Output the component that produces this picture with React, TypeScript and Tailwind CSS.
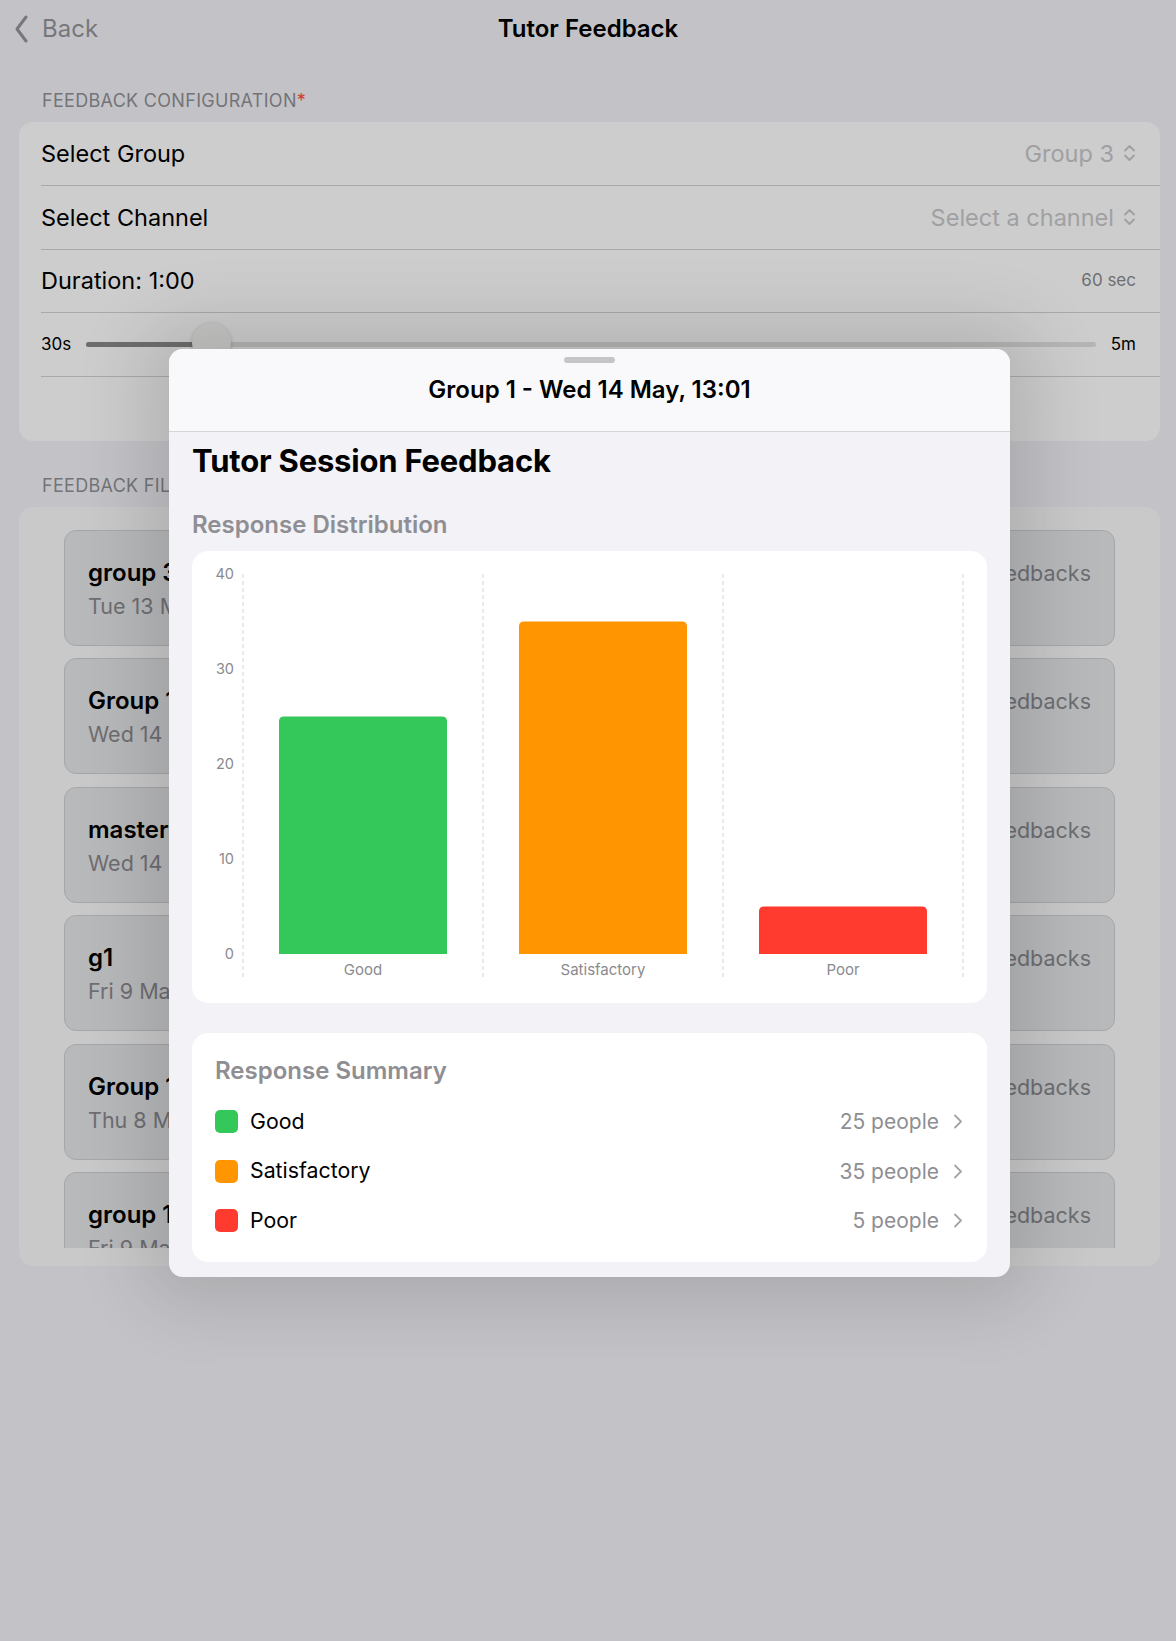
import React from "react";

const UpDown = ({ color = "#a0a0a4" }: { color?: string }) => (
  <svg width="13" height="18" viewBox="0 0 13 18" fill="none">
    <path d="M2 6.5 L6.5 2 L11 6.5" stroke={color} strokeWidth="1.8" strokeLinecap="round" strokeLinejoin="round" />
    <path d="M2 11.5 L6.5 16 L11 11.5" stroke={color} strokeWidth="1.8" strokeLinecap="round" strokeLinejoin="round" />
  </svg>
);

const ChevronRight = () => (
  <svg width="10" height="15" viewBox="0 0 10 15" fill="none">
    <path d="M2 1.5 L8 7.5 L2 13.5" stroke="#a3a3a8" strokeWidth="1.8" strokeLinecap="round" strokeLinejoin="round" />
  </svg>
);

const items = [
  { t: "group 3", s: "Tue 13 May, 10:12", r: "3 feedbacks" },
  { t: "Group 1", s: "Wed 14 May, 13:01", r: "65 feedbacks" },
  { t: "master", s: "Wed 14 May, 09:30", r: "12 feedbacks" },
  { t: "g1", s: "Fri 9 May, 15:20", r: "8 feedbacks" },
  { t: "Group 1", s: "Thu 8 May, 11:45", r: "20 feedbacks" },
  { t: "group 1", s: "Fri 9 May, 10:05", r: "4 feedbacks" },
];

function Chart() {
  const base = 403;
  const u = 9.5;
  const bars = [
    { x: 87, v: 25, c: "#34c759", l: "Good" },
    { x: 327, v: 35, c: "#ff9500", l: "Satisfactory" },
    { x: 567, v: 5, c: "#ff3b30", l: "Poor" },
  ];
  const r = 5;
  return (
    <svg width="795" height="452" viewBox="0 0 795 452" className="block">
      {[51, 291, 531, 771].map((x) => (
        <line key={x} x1={x} x2={x} y1={23} y2={427} stroke="#d4d4d8" strokeWidth="1" strokeDasharray="4 3" />
      ))}
      {[40, 30, 20, 10, 0].map((v) => (
        <text key={v} x={42} y={base - v * u + 5} textAnchor="end" fontSize="14.5" fill="#8a8a8e" fontFamily="Inter, sans-serif">
          {v}
        </text>
      ))}
      {bars.map((b) => {
        const top = base - b.v * u;
        const w = 168;
        const d = `M${b.x} ${base} L${b.x} ${top + r} Q${b.x} ${top} ${b.x + r} ${top} L${b.x + w - r} ${top} Q${b.x + w} ${top} ${b.x + w} ${top + r} L${b.x + w} ${base} Z`;
        return <path key={b.l} d={d} fill={b.c} />;
      })}
      {bars.map((b) => (
        <text key={b.l + "l"} x={b.x + 84} y={424} textAnchor="middle" fontSize="15" fill="#8a8a8e" fontFamily="Inter, sans-serif">
          {b.l}
        </text>
      ))}
    </svg>
  );
}

export default function App() {
  return (
    <div className="relative w-[1176px] h-[1641px] overflow-hidden bg-[#c3c3c7] font-['Inter',sans-serif] text-black">
      {/* Nav */}
      <div className="relative flex h-[58px] items-center">
        <div className="flex items-center pl-[14px] gap-[14px] text-[#77777b]">
          <svg width="14" height="28" viewBox="0 0 14 28" fill="none">
            <path d="M12 2 L3 14 L12 26" stroke="#77777b" strokeWidth="3" strokeLinecap="round" strokeLinejoin="round" />
          </svg>
          <span className="text-[24px] leading-none">Back</span>
        </div>
        <div className="absolute inset-x-0 text-center text-[24px] font-semibold leading-none">Tutor Feedback</div>
      </div>

      {/* Config */}
      <div className="mt-[33px] pl-[42px] text-[18px] leading-[20px] text-[#747478] tracking-[0.3px]">
        FEEDBACK CONFIGURATION<span className="text-[#d43a30]">*</span>
      </div>
      <div className="ml-[19px] w-[1141px] mt-[11px] rounded-[14px] bg-[#cdcdcd] overflow-hidden">
        <div className="h-[63.8px] pl-[22px]">
          <div className="flex h-full items-center justify-between border-b border-[#a9a9ab] pr-[24px]">
            <span className="text-[23.5px]">Select Group</span>
            <span className="flex items-center gap-[9px] text-[23.5px] text-[#a0a0a3]">
              Group 3 <UpDown />
            </span>
          </div>
        </div>
        <div className="h-[63.8px] pl-[22px]">
          <div className="flex h-full items-center justify-between border-b border-[#a9a9ab] pr-[24px]">
            <span className="text-[23.5px]">Select Channel</span>
            <span className="flex items-center gap-[9px] text-[23.5px] text-[#a0a0a3]">
              Select a channel <UpDown />
            </span>
          </div>
        </div>
        <div className="h-[63.8px] pl-[22px]">
          <div className="flex h-full items-center justify-between border-b border-[#a9a9ab] pr-[24px]">
            <span className="text-[23.5px]">Duration: 1:00</span>
            <span className="text-[17px] text-[#6f6f73]">60 sec</span>
          </div>
        </div>
        <div className="h-[63.8px] pl-[22px]">
          <div className="flex h-full items-center border-b border-[#a9a9ab] pr-[24px]">
            <span className="w-[31px] text-[17px]">30s</span>
            <div className="relative ml-[14px] h-[5px] flex-1 rounded-full bg-[#b5b6b4]">
              <div className="h-full w-[126px] rounded-full bg-[#6d6f6d]" />
              <div className="absolute left-[106px] top-[-19px] h-[39px] w-[39px] rounded-full bg-[#c6c7c5] shadow-[0_1px_4px_rgba(0,0,0,0.2)]" />
            </div>
            <span className="ml-[15px] text-[17px]">5m</span>
          </div>
        </div>
        <div className="h-[63.8px]" />
      </div>

      {/* Files */}
      <div className="mt-[35px] pl-[42px] text-[18px] leading-[20px] text-[#747478] tracking-[0.3px]">FEEDBACK FILES</div>
      <div className="ml-[19px] w-[1141px] mt-[11px] h-[759px] rounded-[14px] bg-[#c9c9c9] pt-[23px] pb-[18px] px-[45px]">
        <div className="h-full overflow-hidden flex flex-col gap-[12.4px]">
          {items.map((it, i) => (
            <div key={i} className="shrink-0 h-[116px] rounded-[12px] border border-[#a6a7a9] bg-[#b8b9bb] px-[23px] pt-[26px] flex justify-between">
              <div>
                <div className="text-[24px] font-semibold leading-[32px]">{it.t}</div>
                <div className="mt-[1px] text-[21.5px] leading-[32px] text-[#6e6e72]">{it.s}</div>
              </div>
              <div className="text-[21.5px] leading-[32px] text-[#6e6e72]">{it.r}</div>
            </div>
          ))}
        </div>
      </div>

      {/* Modal */}
      <div className="absolute left-[169px] top-[349px] w-[841px] h-[928px] rounded-[14px] overflow-hidden bg-[#f2f2f7] shadow-[0_0_70px_25px_rgba(0,0,0,0.13)]">
        <div className="flex flex-col items-center bg-[#f9f9fb] border-b border-[#d6d6da] h-[83px] pt-[8px]">
          <div className="h-[6px] w-[51px] rounded-full bg-[#c5c5c9]" />
          <div className="mt-[13px] text-[24px] font-semibold leading-[28px]">Group 1 - Wed 14 May, 13:01</div>
        </div>
        <div className="px-[23px] pt-[11px]">
          <div className="text-[31px] font-bold leading-[36px] tracking-[-0.2px]">Tutor Session Feedback</div>
          <div className="mt-[32px] text-[24px] font-semibold leading-[28px] text-[#8e8e93]">Response Distribution</div>
          <div className="mt-[12px] h-[452px] rounded-[16px] bg-white overflow-hidden">
            <Chart />
          </div>
          <div className="mt-[30px] h-[229px] rounded-[16px] bg-white pl-[23px] pr-[24px] pt-[24px]">
            <div className="text-[24px] font-semibold leading-[28px] text-[#8e8e93]">Response Summary</div>
            <div className="mt-[12px] flex flex-col">
              {[
                { c: "bg-[#34c759]", l: "Good", n: "25 people" },
                { c: "bg-[#ff9500]", l: "Satisfactory", n: "35 people" },
                { c: "bg-[#ff3b30]", l: "Poor", n: "5 people" },
              ].map((row) => (
                <div key={row.l} className="flex h-[49.5px] items-center">
                  <div className={`h-[23px] w-[23px] rounded-[5px] ${row.c}`} />
                  <span className="ml-[12px] text-[21.3px]">{row.l}</span>
                  <span className="ml-auto text-[21px] text-[#8e8e93]">{row.n}</span>
                  <span className="ml-[14px]">
                    <ChevronRight />
                  </span>
                </div>
              ))}
            </div>
          </div>
        </div>
      </div>
    </div>
  );
}
